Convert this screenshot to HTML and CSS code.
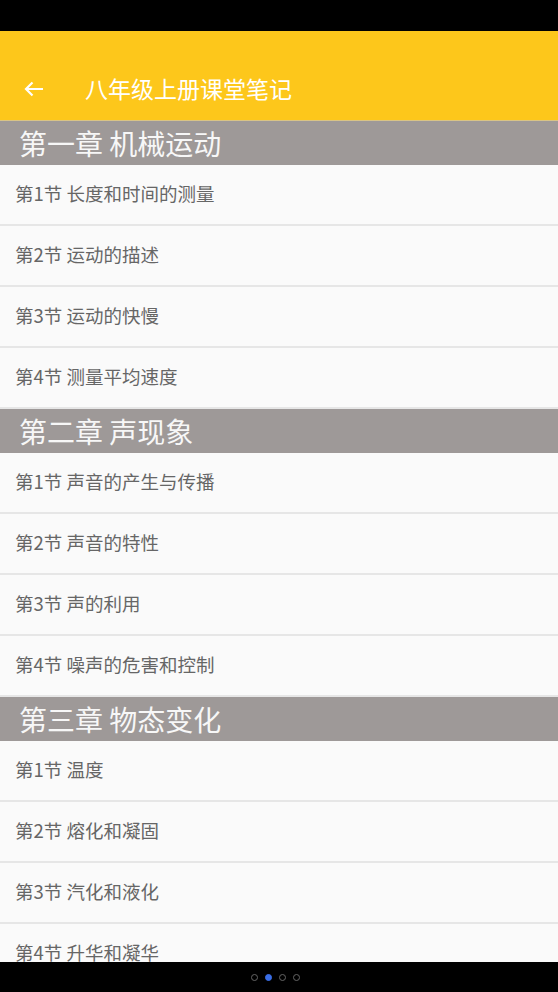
FILE: index.html
```html
<!DOCTYPE html>
<html>
<head>
<meta charset="utf-8">
<link rel="stylesheet" href="styles.css">
</head>
<body>
<div class="screen">
  <div class="status"></div>
  <div class="toolbar">
    <svg class="back" width="20" height="16" viewBox="0 0 20 16"><path d="M19 8H2M8.5 1.5L2 8l6.5 6.5" fill="none" stroke="#fff" stroke-width="2.2"/></svg>
    <span class="title">八年级上册课堂笔记</span>
  </div>
  <div class="list">
    <div class="chapter">第一章 机械运动</div>
    <div class="item">第1节 长度和时间的测量</div>
    <div class="item">第2节 运动的描述</div>
    <div class="item">第3节 运动的快慢</div>
    <div class="item">第4节 测量平均速度</div>
    <div class="chapter">第二章 声现象</div>
    <div class="item">第1节 声音的产生与传播</div>
    <div class="item">第2节 声音的特性</div>
    <div class="item">第3节 声的利用</div>
    <div class="item">第4节 噪声的危害和控制</div>
    <div class="chapter">第三章 物态变化</div>
    <div class="item">第1节 温度</div>
    <div class="item">第2节 熔化和凝固</div>
    <div class="item">第3节 汽化和液化</div>
    <div class="item">第4节 升华和凝华</div>
  </div>
  <div class="nav">
    <span class="dot"></span><span class="dot on"></span><span class="dot"></span><span class="dot"></span>
  </div>
</div>
</body>
</html>
```
FILE: styles.css
```css
html, body { margin: 0; padding: 0; }
body { font-family: "Noto Sans CJK SC", "Noto Sans", sans-serif; background: #000; }
.screen { width: 558px; height: 992px; display: flex; flex-direction: column; overflow: hidden; background: #fafafa; }
.status { height: 31px; background: #000; flex: none; }
.toolbar { height: 90px; flex: none; background: #fdc71b; display: flex; align-items: center; box-sizing: border-box; padding: 26px 0 0 24px; border-bottom: 1px solid #d9c486; }
.back { display: block; }
.title { color: #fff; font-size: 23px; margin-left: 41px; line-height: 1; }
.list { flex: 1; overflow: hidden; background: #fafafa; }
.chapter { height: 44px; background: #9e9998; color: #f7f7f7; font-size: 28px; line-height: 44px; padding-left: 19px; }
.item { height: 59px; border-bottom: 2px solid #e6e6e6; color: #666; font-size: 18.5px; line-height: 57px; padding-left: 15px; box-sizing: content-box; white-space: nowrap; }
.nav { height: 30px; flex: none; background: #000; display: flex; justify-content: center; align-items: center; gap: 7px; padding-right: 8px; }
.dot { width: 5px; height: 5px; border-radius: 50%; border: 1px solid #666; }
.dot.on { background: #3a6ee6; border-color: #3a6ee6; }
```
